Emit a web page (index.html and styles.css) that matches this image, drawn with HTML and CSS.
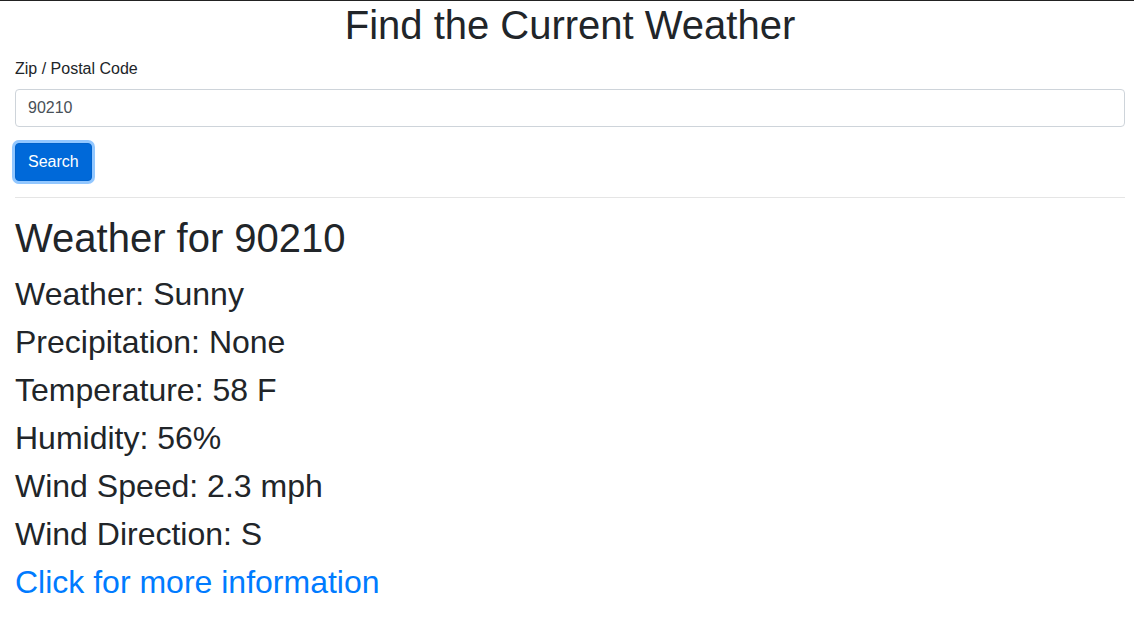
FILE: index.html
```html
<!DOCTYPE html>
<html lang="en">
<head>
<meta charset="utf-8">
<title>Find the Current Weather</title>
<link rel="stylesheet" href="styles.css">
</head>
<body>
<div class="page">
  <h1 class="title">Find the Current Weather</h1>
  <form class="search-form">
    <div class="form-group">
      <label class="label" for="zip">Zip / Postal Code</label>
      <input class="input" id="zip" type="text" value="90210">
    </div>
    <button class="btn" type="button">Search</button>
  </form>
  <hr class="rule">
  <section class="results">
    <h1 class="results-title">Weather for 90210</h1>
    <p class="line">Weather: Sunny</p>
    <p class="line">Precipitation: None</p>
    <p class="line">Temperature: 58 F</p>
    <p class="line">Humidity: 56%</p>
    <p class="line">Wind Speed: 2.3 mph</p>
    <p class="line">Wind Direction: S</p>
    <p class="line"><a class="more" href="#">Click for more information</a></p>
  </section>
</div>
</body>
</html>
```
FILE: styles.css
```css
html, body {
  margin: 0;
  padding: 0;
  background: #fff;
  overflow: hidden;
}
body {
  border-top: 1px solid #222;
  font-family: "Liberation Sans", Arial, sans-serif;
  font-size: 16px;
  line-height: 1.5;
  color: #212529;
}
.page {
  width: 1110px;
  padding: 0 15px;
}
.title {
  margin: 0 0 8px;
  font-size: 40px;
  font-weight: 400;
  line-height: 1.2;
  text-align: center;
}
.search-form {
  margin: 0;
}
.form-group {
  margin-bottom: 16px;
}
.label {
  display: block;
  margin-bottom: 8px;
  font-size: 16px;
}
.input {
  display: block;
  box-sizing: border-box;
  width: 100%;
  height: 38px;
  padding: 6px 12px;
  font-family: inherit;
  font-size: 16px;
  line-height: 1.5;
  color: #495057;
  background: #fff;
  border: 1px solid #ced4da;
  border-radius: 4px;
  outline: none;
}
.btn {
  display: block;
  height: 38px;
  padding: 6px 12px;
  font-family: inherit;
  font-size: 16px;
  line-height: 1.5;
  color: #fff;
  background: #0069d9;
  border: 1px solid #0062cc;
  border-radius: 4px;
  box-shadow: 0 0 0 3px rgba(38, 143, 255, 0.5);
}
.rule {
  margin: 16px 0;
  border: 0;
  border-top: 1px solid rgba(0, 0, 0, 0.1);
  height: 0;
}
.results-title {
  margin: 0 0 8px;
  font-size: 40px;
  font-weight: 400;
  line-height: 1.2;
}
.line {
  margin: 0;
  font-size: 32px;
  line-height: 48px;
}
.more {
  color: #007bff;
  text-decoration: none;
}
```
